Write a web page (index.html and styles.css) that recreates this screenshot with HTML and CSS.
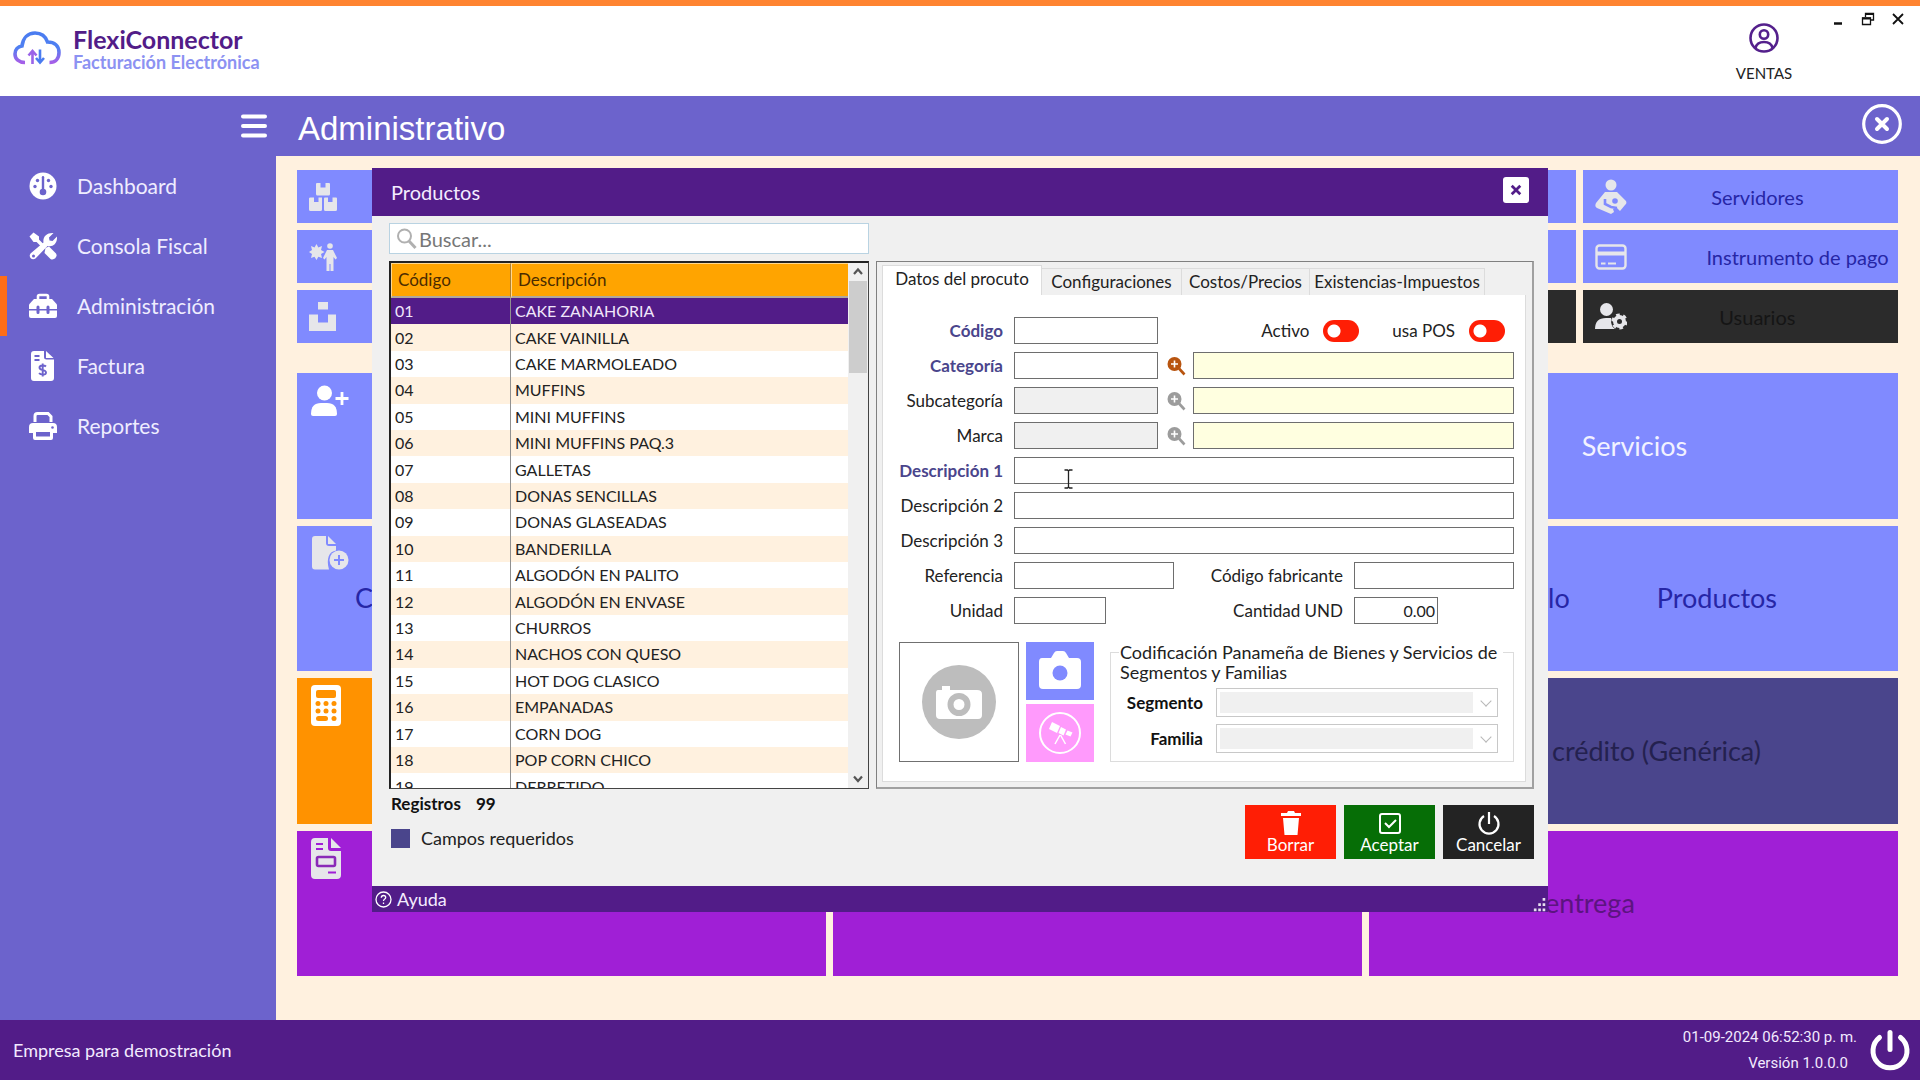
FILE: index.html
```html
<!DOCTYPE html>
<html lang="es">
<head>
<meta charset="utf-8">
<title>FlexiConnector - Facturación Electrónica</title>
<link rel="stylesheet" href="styles.css">
</head>
<body>
<div class="app">
  <header class="topbar">
    <div class="brand">
      <svg class="brand-logo" viewBox="0 0 48 34" fill="none">
        <defs><linearGradient id="cloud" x1="0" y1="0" x2="0" y2="1"><stop offset="0" stop-color="#4a7cf0"/><stop offset=".5" stop-color="#4f80f2"/><stop offset="1" stop-color="#a55fe8"/></linearGradient></defs>
        <path d="M12 31.500C6 31.500 2 28 2 23c0-4.500 3-7.500 7-8C10 7 15 2 22 2c6 0 10.500 3 12.500 9 7 0 11.500 4 11.500 10.500 0 6-3.500 10-9.500 10" stroke="url(#cloud)" stroke-width="3.600"/>
        <path d="M19.500 33V21M15.500 24.500l4-4.500 4 4.500" stroke="#9a63e8" stroke-width="2.600"/>
        <path d="M27 18.500v12M23 27l4 4.500 4-4.500" stroke="#4a7cf0" stroke-width="2.600"/>
      </svg>
      <div>
        <div class="brand-name">FlexiConnector</div>
        <div class="brand-sub">Facturación Electrónica</div>
      </div>
    </div>
    <div class="user">
      <svg width="30" height="30" viewBox="0 0 30 30" fill="none" stroke="#54208c" stroke-width="2.600"><circle cx="15" cy="15" r="13.500"/><circle cx="15" cy="11.500" r="4.200"/><path d="M6.500 25c1-4.500 4.500-6 8.500-6s7.500 1.500 8.500 6"/></svg>
      <span>VENTAS</span>
    </div>
    <div class="window-controls">
      <button type="button" aria-label="Minimizar"><svg width="14" height="14" viewBox="0 0 14 14"><path d="M3 11.500h8" stroke="#111" stroke-width="2.500"/></svg></button>
      <button type="button" aria-label="Restaurar"><svg width="14" height="14" viewBox="0 0 14 14" fill="none" stroke="#111" stroke-width="1.300"><path d="M4.500 5V1.500h8V8H10"/><path d="M4 2h9" stroke-width="2"/><path d="M1.500 6h8v6.500h-8z"/><path d="M1 6.500h9" stroke-width="2"/></svg></button>
      <button type="button" aria-label="Cerrar"><svg width="14" height="14" viewBox="0 0 14 14" stroke="#111" stroke-width="1.800"><path d="M2 2l10 10M12 2L2 12"/></svg></button>
    </div>
  </header>

  <div class="middle">
    <nav class="sidebar">
      <button type="button" class="menu-toggle" aria-label="Menú"><svg width="26" height="24" viewBox="0 0 26 24" stroke="#fff" stroke-width="4" stroke-linecap="round"><path d="M2 2.500h22M2 12h22M2 21.500h22"/></svg></button>
      <a class="nav-item" href="#"><svg width="28" height="28" viewBox="0 0 28 28"><circle cx="14" cy="14" r="13.500" fill="#fff"/><g fill="#6c63cc"><circle cx="8.500" cy="8.500" r="1.700"/><circle cx="19.500" cy="8.500" r="1.700"/><circle cx="6" cy="14.500" r="1.700"/><circle cx="22" cy="14.500" r="1.700"/><rect x="12.800" y="4" width="2.400" height="16" rx="1.200"/><circle cx="14" cy="20" r="3.300"/></g></svg>Dashboard</a>
      <a class="nav-item" href="#"><svg width="28" height="28" viewBox="0 0 28 28"><path d="M4 4l9 9" stroke="#fff" stroke-width="3.400"/><path d="M0.500 4.500L4.500.500l5.500 4V8L8 10H4.500z" fill="#fff"/><path d="M16.500 16l3.500-1.500 7 7c2 3-2 7.500-5.500 5.500L15.500 21z" fill="#fff"/><path d="M1.500 21.500L14.500 10.500C13.500 4.500 18 .500 24.500 1l-4.500 4.500.500 3 3 .600L28 4.500c.500 7-4 11-9.500 9.500L6.500 26.500c-3.500 2.500-7.500-1.500-5-5z" fill="#fff"/><circle cx="4.500" cy="24" r="1.500" fill="#6c63cc"/></svg>Consola Fiscal</a>
      <a class="nav-item active" href="#"><svg width="28" height="28" viewBox="0 0 28 28"><path d="M9 8V4.500Q9 3 10.500 3h7Q19 3 19 4.500V8" fill="none" stroke="#fff" stroke-width="2.600"/><path d="M5 7h18l5 5.500V17H0v-4.500z" fill="#fff"/><path d="M0 18.500h28V24q0 2-2 2H2q-2 0-2-2z" fill="#fff"/><path d="M9 15v5.500M19 15v5.500" stroke="#6c63cc" stroke-width="3" stroke-linecap="round"/></svg>Administración</a>
      <a class="nav-item" href="#"><svg width="28" height="30" viewBox="0 0 28 30"><path d="M5 0h10v6q0 2.500 2.500 2.500H25V27q0 3-3 3H5q-3 0-3-3V3q0-3 3-3z" fill="#fff"/><path d="M17 0l7.500 7H17z" fill="#fff"/><path d="M5.500 5h5M5.500 9h5" stroke="#6c63cc" stroke-width="1.800"/><path d="M17 15.500c-1.500-1.400-6.500-1.500-6.500 1.200 0 3.300 6.500 1.600 6.500 4.700 0 2.800-5 2.800-7 .8M13.700 12.500v13" stroke="#6c63cc" stroke-width="1.900" fill="none"/></svg>Factura</a>
      <a class="nav-item" href="#"><svg width="28" height="28" viewBox="0 0 28 28"><path d="M6 10V4q0-2.500 2.500-2.500H19L22 4.500V10" fill="none" stroke="#fff" stroke-width="3"/><path d="M4 11h20q4 0 4 4v6h-4v5q0 2-2 2H6q-2 0-2-2v-5H0v-6q0-4 4-4z" fill="#fff"/><path d="M7 20h14v4.500H7z" fill="#6c63cc"/><circle cx="23.500" cy="15.500" r="1.300" fill="#6c63cc"/></svg>Reportes</a>
    </nav>

    <main class="main">
      <div class="titlebar">
        <h1>Administrativo</h1>
        <button type="button" class="round-close" aria-label="Cerrar módulo"><svg width="42" height="42" viewBox="0 0 42 42" fill="none" stroke="#fff"><circle cx="21" cy="21" r="18.300" stroke-width="3.200"/><path d="M16 16l10 10M26 16L16 26" stroke-width="4" stroke-linecap="round"/></svg></button>
      </div>
      <div class="board">
        <div class="tiles-small">
          <button type="button" class="tile" aria-label="Inventario"><svg width="28" height="30" viewBox="0 0 28 30" fill="#e6e6ea"><path d="M8 1h3.500v4.500h5V1H20q1 0 1 1v10q0 1.500-1.500 1.500h-11Q7 13.500 7 12V2q0-1 1-1zM1.500 15.500H5V20h4.500v-4.500H13v12q0 1.500-1.500 1.500h-10Q0 29 0 27.500v-11q0-1 1.500-1zM16 15.500h3V20h4.500v-4.500H27q1 0 1 1v11q0 1.500-1.500 1.500h-10q-1.500 0-1.500-1.500v-11q0-1 1-1z"/></svg></button>
          <div class="tile"></div><div class="tile"></div><div class="tile"></div>
          <button type="button" class="tile"><svg width="32" height="36" viewBox="0 0 32 36"><circle cx="16" cy="6" r="5.500" fill="#e6e6ea"/><path d="M10 13h12l9 9c1 2 0 3-1 4l-5 6-3-3-4 1 1 3-3 2L2 29c-2-1-2-3-1-5z" fill="#e6e6ea"/><circle cx="20" cy="22" r="2.800" fill="#808aff"/><path d="M10 20v5l6 3 6 1" stroke="#808aff" stroke-width="2.600" fill="none"/></svg><span class="label">Servidores</span></button>
          <button type="button" class="tile" aria-label="Clientes"><svg width="28" height="30" viewBox="0 0 28 30" fill="#e6e6ea"><path d="M7.500 2l1.800 3.500L13 4l-1 4 3.500 2-3.500 2 1 4-3.700-1.200L7.500 18l-2-3.200L2 16l1-4-3-2 3-2-1-4 3.500 1.500z"/><circle cx="21" cy="4" r="2.800"/><path d="M18 8h6l4 8-1.500 1.500L24.500 15v14H21.500v-7h-1v7h-3V15l-2 2.500L14 16z"/></svg></button>
          <div class="tile"></div><div class="tile"></div><div class="tile"></div>
          <button type="button" class="tile"><svg width="32" height="32" viewBox="0 0 32 32" fill="none" stroke="#e6e6ea"><rect x="1.500" y="4.500" width="29" height="23" rx="3" stroke-width="2.400"/><path d="M2 12.500h28" stroke-width="4"/><path d="M6 22.500h4.500M13 22.500h8" stroke-width="2.200"/></svg><span class="label">Instrumento de pago</span></button>
          <button type="button" class="tile" aria-label="Almacén"><svg width="28" height="30" viewBox="0 0 28 30" fill="#e6e6ea"><path d="M9 0h10v7.500H9zM0 12.500h9v8h10v-8h8V29H0z"/></svg></button>
          <div class="tile"></div><div class="tile"></div><div class="tile dark"></div>
          <button type="button" class="tile dark"><svg width="32" height="32" viewBox="0 0 32 32"><circle cx="11.500" cy="8.500" r="6.500" fill="#e6e6ea"/><path d="M0 28q0-11 11-11h5q1 1 0 3 0 5 4 8z" fill="#e6e6ea"/><circle cx="24.500" cy="20.500" r="4.500" fill="none" stroke="#e6e6ea" stroke-width="4"/><circle cx="24.500" cy="20.500" r="6.800" fill="none" stroke="#e6e6ea" stroke-width="2.600" stroke-dasharray="3.600 3.520"/></svg><span class="label">Usuarios</span></button>
        </div>
        <div class="tiles-large">
          <button type="button" class="tile" aria-label="Nuevo cliente"><svg width="38" height="34" viewBox="0 -2 38 34"><circle cx="13.500" cy="8" r="7.500" fill="#fff"/><path d="M0 29q0-11 10-11h6q10 0 10 11 0 2-2 2H2q-2 0-2-2z" fill="#fff"/><path d="M31 7v13M24.500 13.500h13" stroke="#fff" stroke-width="2.800"/></svg></button>
          <div class="tile"></div>
          <button type="button" class="tile centered"><span class="label white">Servicios</span></button>
          <button type="button" class="tile"><svg width="38" height="34" viewBox="0 0 38 34"><path d="M4 0h11v7q0 3 3 3h7v4.500c-7 1-10 8-7 19H4q-3 0-3-3V3q0-3 3-3z" fill="#e6e6ea"/><path d="M17 0l8 8h-8z" fill="#e6e6ea"/><circle cx="28" cy="24" r="9.500" fill="#e6e6ea"/><path d="M28 19v10M23 24h10" stroke="#808aff" stroke-width="2"/></svg><span class="label from-icon">Cotizaciones</span></button>
          <div class="tile"></div>
          <button type="button" class="tile pair"><span class="label">Artículo</span><span class="label">Productos</span></button>
          <button type="button" class="tile orange" aria-label="Caja"><svg width="30" height="42" viewBox="0 0 30 42"><rect width="30" height="41" rx="4" fill="#fff"/><g fill="#ff9200"><rect x="5" y="5" width="20" height="8" rx="2"/><circle cx="7" cy="18.500" r="2.500"/><circle cx="15" cy="18.500" r="2.500"/><circle cx="23" cy="18.500" r="2.500"/><circle cx="7" cy="26" r="2.500"/><circle cx="15" cy="26" r="2.500"/><circle cx="23" cy="26" r="2.500"/><rect x="5" y="31" width="12" height="5" rx="2.500"/><circle cx="23" cy="33.500" r="2.500"/></g></svg></button>
          <div class="tile orange"></div>
          <button type="button" class="tile indigo trailing"><span class="label">Nota de crédito (Genérica)</span></button>
          <button type="button" class="tile purple" aria-label="Factura"><svg width="30" height="42" viewBox="0 0 30 42"><path d="M4 0h13v10q0 3 3 3h10v24q0 4-4 4H4q-4 0-4-4V4q0-4 4-4z" fill="#e6e6ea"/><path d="M20 0l10 10H20z" fill="#e6e6ea"/><path d="M5 6h7M5 11h7M17 34.500h8" stroke="#a01fd6" stroke-width="2.200"/><rect x="6" y="19" width="18" height="9" rx="1.500" fill="none" stroke="#8a2ab8" stroke-width="2.600"/></svg></button>
          <div class="tile purple"></div>
          <button type="button" class="tile purple delivery"><span class="label">entrega</span></button>
        </div>
      </div>
    </main>
  </div>

  <footer class="statusbar">
    <span class="company">Empresa para demostración</span>
    <div class="build"><span>01-09-2024 06:52:30 p. m.</span><span class="version">Versión 1.0.0.0</span></div>
    <button type="button" aria-label="Salir"><svg width="42" height="42" viewBox="0 0 42 42" fill="none" stroke="#fff" stroke-width="5" stroke-linecap="round"><path d="M21 3.500v17"/><path d="M10.500 8.500a17 17 0 1 0 21 0"/></svg></button>
  </footer>
</div>

<div class="overlay">
  <section class="dialog" role="dialog" aria-labelledby="dialog-title">
    <header class="dialog-head">
      <h2 id="dialog-title">Productos</h2>
      <button type="button" aria-label="Cerrar"><svg width="12" height="12" viewBox="0 0 14 14" stroke="#521c88" stroke-width="3.200"><path d="M2 2l10 10M12 2L2 12"/></svg></button>
    </header>
    <div class="dialog-body">
      <div class="search">
        <svg width="22" height="22" viewBox="0 0 22 22" fill="none" stroke="#b0b0b0"><circle cx="8.500" cy="8" r="6.500" stroke-width="2"/><path d="M13 13l6.500 7" stroke-width="3"/></svg>
        <input type="text" placeholder="Buscar..." aria-label="Buscar">
      </div>
      <div class="list">
        <div class="list-view">
          <table>
            <thead><tr><th class="code">Código</th><th>Descripción</th></tr></thead>
            <tbody>
              <tr class="selected"><td>01</td><td>CAKE ZANAHORIA</td></tr>
              <tr><td>02</td><td>CAKE VAINILLA</td></tr>
              <tr><td>03</td><td>CAKE MARMOLEADO</td></tr>
              <tr><td>04</td><td>MUFFINS</td></tr>
              <tr><td>05</td><td>MINI MUFFINS</td></tr>
              <tr><td>06</td><td>MINI MUFFINS PAQ.3</td></tr>
              <tr><td>07</td><td>GALLETAS</td></tr>
              <tr><td>08</td><td>DONAS SENCILLAS</td></tr>
              <tr><td>09</td><td>DONAS GLASEADAS</td></tr>
              <tr><td>10</td><td>BANDERILLA</td></tr>
              <tr><td>11</td><td>ALGODÓN EN PALITO</td></tr>
              <tr><td>12</td><td>ALGODÓN EN ENVASE</td></tr>
              <tr><td>13</td><td>CHURROS</td></tr>
              <tr><td>14</td><td>NACHOS CON QUESO</td></tr>
              <tr><td>15</td><td>HOT DOG CLASICO</td></tr>
              <tr><td>16</td><td>EMPANADAS</td></tr>
              <tr><td>17</td><td>CORN DOG</td></tr>
              <tr><td>18</td><td>POP CORN CHICO</td></tr>
              <tr><td>19</td><td>DERRETIDO</td></tr>
            </tbody>
          </table>
        </div>
        <div class="scrollbar">
          <svg width="18" height="18" viewBox="0 0 18 18" fill="none" stroke="#555" stroke-width="2.200"><path d="M5 11l4-4.500 4 4.500"/></svg>
          <div class="thumb"></div>
          <svg class="down" width="18" height="18" viewBox="0 0 18 18" fill="none" stroke="#555" stroke-width="2.200"><path d="M5 6.500L9 11l4-4.500"/></svg>
        </div>
      </div>

      <div class="panel">
        <div class="tabs" role="tablist">
          <button type="button" role="tab" class="tab current" aria-selected="true">Datos del procuto</button>
          <button type="button" role="tab" class="tab">Configuraciones</button>
          <button type="button" role="tab" class="tab">Costos/Precios</button>
          <button type="button" role="tab" class="tab">Existencias-Impuestos</button>
        </div>
        <form class="page">
          <div class="row">
            <label class="lbl req" for="codigo">Código</label><input id="codigo" class="field w-code" type="text">
            <span class="switches">
              <label class="switch">Activo<input type="checkbox"></label>
              <label class="switch">usa POS<input type="checkbox"></label>
            </span>
          </div>
          <div class="row">
            <label class="lbl req" for="categoria">Categoría</label><input id="categoria" class="field w-code" type="text">
            <button type="button" class="lookup on" aria-label="Buscar categoría"><svg width="20" height="20" viewBox="0 0 20 20"><circle cx="8.500" cy="8" r="7" fill="currentColor"/><path d="M13 12.500l5.500 6" stroke="currentColor" stroke-width="2.600"/><path d="M8.500 4.500v7M5 8h7" stroke="#fff" stroke-width="1.600"/></svg></button>
            <input class="field fill info" type="text" readonly aria-label="Nombre de categoría">
          </div>
          <div class="row">
            <label class="lbl" for="subcategoria">Subcategoría</label><input id="subcategoria" class="field w-code" type="text" disabled>
            <button type="button" class="lookup" aria-label="Buscar subcategoría"><svg width="20" height="20" viewBox="0 0 20 20"><circle cx="8.500" cy="8" r="7" fill="currentColor"/><path d="M13 12.500l5.500 6" stroke="currentColor" stroke-width="2.600"/><path d="M8.500 4.500v7M5 8h7" stroke="#fff" stroke-width="1.600"/></svg></button>
            <input class="field fill info" type="text" readonly aria-label="Nombre de subcategoría">
          </div>
          <div class="row">
            <label class="lbl" for="marca">Marca</label><input id="marca" class="field w-code" type="text" disabled>
            <button type="button" class="lookup" aria-label="Buscar marca"><svg width="20" height="20" viewBox="0 0 20 20"><circle cx="8.500" cy="8" r="7" fill="currentColor"/><path d="M13 12.500l5.500 6" stroke="currentColor" stroke-width="2.600"/><path d="M8.500 4.500v7M5 8h7" stroke="#fff" stroke-width="1.600"/></svg></button>
            <input class="field fill info" type="text" readonly aria-label="Nombre de marca">
          </div>
          <div class="row">
            <label class="lbl req" for="desc1">Descripción 1</label><input id="desc1" class="field fill" type="text">
            <svg class="ibeam" width="9" height="20" viewBox="0 0 9 20" fill="none" stroke="#222" stroke-width="1.300"><path d="M.500 1h3l1 1 1-1h3M4.500 2v16M.500 19h3l1-1 1 1h3"/></svg>
          </div>
          <div class="row"><label class="lbl" for="desc2">Descripción 2</label><input id="desc2" class="field fill" type="text"></div>
          <div class="row"><label class="lbl" for="desc3">Descripción 3</label><input id="desc3" class="field fill" type="text"></div>
          <div class="row">
            <label class="lbl" for="referencia">Referencia</label><input id="referencia" class="field w-ref" type="text">
            <label class="lbl wide" for="fabricante">Código fabricante</label><input id="fabricante" class="field w-ref" type="text">
          </div>
          <div class="row">
            <label class="lbl" for="unidad">Unidad</label><span class="slot"><input id="unidad" class="field w-unit" type="text"></span>
            <label class="lbl wide" for="cantidad">Cantidad UND</label><span class="slot"><input id="cantidad" class="field w-qty" type="text" value="0.00"></span>
          </div>
          <div class="extras">
            <div class="photo"><svg width="76" height="76" viewBox="0 0 76 76"><circle cx="38" cy="38" r="37" fill="#bdbdbd"/><path d="M17 26h4v-4h8v4h27q5 0 5 4v21q0 4-4 4H19q-4 0-4-4V29q0-3 2-3z" fill="#fff"/><circle cx="38" cy="40.500" r="8.500" fill="#fff" stroke="#bdbdbd" stroke-width="6"/></svg></div>
            <div class="photo-actions">
              <button type="button" class="take" aria-label="Tomar foto"><svg width="44" height="40" viewBox="0 0 44 40"><path d="M4 7h9l3-5q1-2 3-2h6q2 0 3 2l3 5h8q4 0 4 4v23q0 4-4 4H5q-4 0-4-4V11q0-4 3-4z" fill="#fff"/><circle cx="22" cy="22" r="7.500" fill="#808aff"/></svg></button>
              <button type="button" class="find" aria-label="Buscar imagen"><svg width="44" height="44" viewBox="0 0 44 44"><circle cx="22" cy="22" r="20" fill="none" stroke="#fff" stroke-width="2"/><g fill="#fff"><path d="M14 11l8 4-3 7-8-4zM23 16l5 2.500-2.500 6-5-2.500zM29.500 19.500l5 2-2 4-5-2z"/></g><path d="M22 24l-5 9M22.500 24l5 9" stroke="#fff" stroke-width="1.500"/></svg></button>
            </div>
            <fieldset class="cpbs">
              <legend>Codificación Panameña de Bienes y Servicios de Segmentos y Familias</legend>
              <div class="pick"><label for="segmento">Segmento</label><select id="segmento" disabled><option></option></select></div>
              <div class="pick"><label for="familia">Familia</label><select id="familia" disabled><option></option></select></div>
            </fieldset>
          </div>
        </form>
      </div>

      <div class="notes">
        <div class="count">Registros <span>99</span></div>
        <div class="legend-row"><i class="swatch"></i>Campos requeridos</div>
      </div>
      <div class="actions">
        <button type="button" class="act red"><svg width="24" height="26" viewBox="0 0 24 26" fill="#fff"><path d="M2 3h6l1-2h6l1 2h6v3H2zM4 8h16l-1.500 17h-13z"/></svg>Borrar</button>
        <button type="button" class="act green"><svg width="24" height="26" viewBox="0 0 24 26" fill="none" stroke="#fff" stroke-width="2"><rect x="2" y="4" width="20" height="19" rx="2"/><path d="M7 13l4 4 7-7"/></svg>Aceptar</button>
        <button type="button" class="act black"><svg width="24" height="26" viewBox="0 0 24 26" fill="none" stroke="#fff" stroke-width="2.200"><path d="M12 2v12M7 6a9.500 9.500 0 1 0 10 0"/></svg>Cancelar</button>
      </div>
    </div>
    <footer class="dialog-foot">
      <a href="#"><svg width="17" height="17" viewBox="0 0 17 17" fill="none" stroke="#fff" stroke-width="1.300"><circle cx="8.500" cy="8.500" r="7.500"/><path d="M6.300 6.800q0-2.300 2.200-2.300t2.200 2q0 1-1.200 1.700-1 .600-1 1.800M8.500 11.500V13"/></svg>Ayuda</a>
      <svg class="grip" width="14" height="14" viewBox="0 0 16 16" fill="#e8e0f0"><path d="M11 0h3v3h-3zM11 6h3v3h-3zM6 6h3v3H6zM11 12h3v3h-3zM6 12h3v3H6zM1 12h3v3H1z"/></svg>
    </footer>
  </section>
</div>
</body>
</html>
```
FILE: styles.css
```css
* { box-sizing: border-box; }
:root {
  --ui: Lato, "Noto Sans", sans-serif;
  --deep: #521c88;
  --slate: #6c63cc;
  --tile: #808aff;
  --cream: #fff1df;
}
body { margin: 0; font: 17px/20px var(--ui); color: #222; }
button, input, select { font: inherit; color: inherit; }
button { border: 0; padding: 0; background: none; }
svg { display: block; flex: none; }
a { color: inherit; text-decoration: none; }

.app { display: flex; flex-direction: column; min-height: 100vh; }

.topbar { display: flex; height: 96px; border-top: 6px solid #ff8431; background: #fff; }
.brand { display: flex; flex: 1; gap: 12px; padding: 17px 0 0 13px; }
.brand-logo { width: 48px; height: 34px; margin-top: 8px; }
.brand-name { font-size: 25px; line-height: 32px; font-weight: 700; color: var(--deep); }
.brand-sub { font-size: 18px; line-height: 14px; font-weight: 700; color: #8c92f2; }
.user { display: flex; flex-direction: column; align-items: center; gap: 10px; padding-top: 17px; width: 60px; font-size: 15px; }
.window-controls { display: flex; gap: 16px; align-items: flex-start; padding: 6px 15px 0 37px; }

.middle { display: flex; flex: 1; }
.sidebar { width: 276px; background: var(--slate); color: #efedff; }
.menu-toggle { display: block; margin: 18px 9px 18px auto; }
.nav-item { display: flex; align-items: center; gap: 20px; height: 60px; padding-left: 29px; font-size: 21px; line-height: 24px; }
.nav-item.active { border-left: 7px solid #ff6d17; padding-left: 22px; }

.main { flex: 1; display: flex; flex-direction: column; background: var(--cream); }
.titlebar { display: flex; align-items: center; justify-content: space-between; height: 60px; padding: 0 17px 4px 22px; background: var(--slate); color: #fff; }
.titlebar h1 { margin: 0; padding-top: 10px; font: 33px/40px "Liberation Sans", Arial, sans-serif; }
.board { display: flex; flex-direction: column; flex: 1; gap: 30px; padding: 14px 22px 44px 21px; }
.tiles-small { display: grid; grid-template-columns: repeat(5, minmax(0, 1fr)); grid-auto-rows: 53px; gap: 7px; }
.tiles-large { display: grid; flex: 1; grid-template-columns: repeat(3, minmax(0, 1fr)); grid-template-rows: repeat(4, 1fr); gap: 7px; }
.tile { display: flex; align-items: flex-start; padding: 10px 12px; background: var(--tile); color: #2626a6; text-align: left; font-size: 20px; line-height: 24px; }
.tiles-small .tile { align-items: center; padding: 0 0 0 12px; }
.tiles-small .label { min-width: 102px; margin-left: 79px; text-align: center; white-space: nowrap; }
.tiles-large .tile { padding-left: 14px; font-size: 27px; line-height: 32px; }
.tile.dark { background: #2b2b2b; color: #151515; }
.tile.orange { background: #ff9200; }
.tile.indigo { background: #4a458c; color: #24214f; }
.tile.purple { background: #a01fd6; color: #5c1480; }
.tiles-large .orange, .tiles-large .purple { padding-top: 7px; }
.label.white { color: #f2f2ff; }
.tiles-large .centered { align-items: center; justify-content: center; }
.tiles-large .trailing { align-items: center; justify-content: flex-end; padding-right: 137px; }
.tiles-large .delivery { align-items: center; padding: 10px 0 10px 176px; }
.from-icon { align-self: center; padding-left: 6px; }
.tiles-large .pair { align-items: center; justify-content: flex-end; gap: 87px; padding-right: 121px; }

.statusbar { display: flex; align-items: center; height: 60px; padding: 0 9px 0 13px; background: var(--deep); color: #f2eaff; }
.company { flex: 1; font-size: 18px; }
.build { display: flex; flex-direction: column; gap: 6px; margin-right: 12px; font: 15px/20px Roboto, "Liberation Sans", sans-serif; text-align: right; }
.version { padding-right: 9px; }

.overlay { position: fixed; inset: 0; display: grid; place-items: center; }
.dialog { width: 1176px; background: #f0f0f0; }
.dialog-head { display: flex; align-items: center; justify-content: space-between; height: 48px; padding: 0 19px 4px 19px; background: var(--deep); color: #f4ecff; }
.dialog-head h2 { margin: 4px 0 0; font-size: 20px; line-height: 24px; font-weight: 400; }
.dialog-head button { display: grid; place-items: center; width: 26px; height: 26px; border-radius: 3px; background: #fff; }
.dialog-body { display: grid; grid-template-columns: 480px minmax(0, 1fr); grid-template-rows: 31px auto auto; gap: 7px; padding: 7px 14px 27px 17px; }
.search { display: flex; align-items: center; gap: 1px; padding-left: 6px; border: 1px solid #b9d3e2; background: #fff; }
.search input { flex: 1; min-width: 0; border: 0; padding: 0; background: none; font-size: 20px; outline: 0; }
.search input::placeholder { color: #777; opacity: 1; }

.list { grid-area: 2 / 1; display: flex; height: 528px; border: 1px solid #444; border-top: 2px solid #222; border-left: 2px solid #222; background: #fff; overflow: hidden; }
.list-view { flex: 1; overflow: hidden; }
.list table { width: 100%; height: 537px; border-collapse: separate; border-spacing: 0; table-layout: fixed; }
.list th { height: 35px; padding: 0 0 0 6px; border-top: 1px solid #ffd890; border-left: 1px solid #ffd890; border-bottom: 2px solid #b0a89c; background: #ffa400; color: #4a2c00; font-weight: 400; text-align: left; }
.list th.code { width: 120px; border-right: 1px solid #b08030; }
.list td { padding: 0 0 0 4px; font-size: 16px; line-height: 20px; }
.list td:first-child { border-right: 1px solid #909090; }
.list tbody tr:nth-child(even) { background: var(--cream); }
.list tbody tr.selected { background: var(--deep); color: #f0e6fa; }
.scrollbar { display: flex; flex-direction: column; width: 20px; padding: 0 1px; background: #f0f0f0; }
.thumb { height: 92px; background: #cdcdcd; }
.down { margin-top: auto; }

.panel { grid-area: 2 / 2; display: flex; flex-direction: column; padding: 3px 6px 5px 5px; border: 1px solid #808080; border-right: 2px solid #a0a0a0; border-bottom: 2px solid #a0a0a0; }
.tabs { display: flex; align-items: flex-end; height: 30px; }
.tab { height: 27px; padding: 0; border: 1px solid #dcdcdc; border-bottom: 0; border-left: 0; flex: 0 0 140px; white-space: nowrap; }
.tab.current { height: 30px; flex-basis: 160px; background: #fff; border-left: 1px solid #dcdcdc; padding-bottom: 3px; }
.tab:nth-child(3) { flex-basis: 128px; }
.tab:nth-child(4) { flex-basis: 175px; }
.page { flex: 1; display: flex; flex-direction: column; gap: 8px; padding: 22px 11px 0 16px; border: 1px solid #dcdcdc; border-top: 0; background: #fff; }
.row { position: relative; display: flex; align-items: center; height: 27px; }
.lbl { width: 104px; margin-right: 11px; text-align: right; white-space: nowrap; }
.lbl.req { color: #4a458c; font-weight: 700; }
.lbl.wide { width: auto; flex: 1; }
.field { height: 27px; min-width: 0; padding: 0 2px; border: 1px solid #6e6e6e; background: #fff; outline: 0; }
.field:disabled { background: #f0f0f0; }
.field.info { background: #ffffe0; }
.fill { flex: 1; }
.w-code { width: 144px; }
.w-ref, .slot { width: 160px; flex: none; }
.w-unit { width: 92px; }
.w-qty { width: 84px; font-size: 16px; text-align: right; }
.slot { display: flex; }
.lookup { width: 20px; margin: 0 7px 0 8px; color: #9c9c9c; }
.lookup.on { color: #b8540f; }
.switches { display: flex; flex: 1; justify-content: flex-end; gap: 33px; padding-right: 9px; }
.switch { display: flex; align-items: center; gap: 14px; }
.switch input { appearance: none; width: 36px; height: 22px; margin: 0; border-radius: 11px; background: radial-gradient(circle at 11px 11px, #fff 6px, #ff1e05 7px); }
.ibeam { position: absolute; left: 165px; top: 12px; }

.extras { display: flex; margin-top: 10px; }
.photo { display: grid; place-items: center; width: 120px; height: 120px; border: 1px solid #707070; }
.photo-actions { display: flex; flex-direction: column; gap: 4px; margin: 0 16px 0 7px; }
.photo-actions button { display: grid; place-items: center; width: 68px; height: 58px; }
.take { background: var(--tile); }
.find { background: #ff9afc; }
.cpbs { display: flex; flex-direction: column; gap: 7px; flex: 1; min-width: 0; height: 120px; margin: 0; padding: 26px 15px 0 8px; border: 1px solid #dcdcdc; }
.cpbs legend { height: 20px; width: 384px; margin-right: -8px; padding: 0 1px; font-size: 18px; line-height: 20px; }
.pick { position: relative; display: flex; align-items: center; justify-content: flex-end; gap: 13px; color: #111; font-weight: 700; }
.pick select { appearance: none; width: 282px; height: 29px; padding: 3px 24px 3px 3px; border: 1px solid #c8c8c8; background: linear-gradient(#f0f0f0, #f0f0f0) content-box, #fff; opacity: 1; }
.pick::after { content: ""; position: absolute; right: 8px; top: 9px; width: 7px; height: 7px; border: solid #b8b8b8; border-width: 0 1px 1px 0; transform: rotate(45deg); }

.notes { grid-area: 3 / 1; display: flex; flex-direction: column; gap: 16px; padding: 0 2px; }
.count { font-weight: 700; line-height: 16px; color: #111; }
.count span { padding-left: 11px; }
.legend-row { display: flex; align-items: center; gap: 11px; font-size: 18px; }
.swatch { width: 19px; height: 19px; background: #4a458c; }
.actions { grid-area: 3 / 2; display: flex; justify-content: flex-end; gap: 8px; padding-top: 9px; }
.act { display: flex; flex-direction: column; align-items: center; width: 91px; height: 54px; padding-top: 5px; color: #fff; line-height: 18px; }
.red { background: #ff1e05; }
.green { background: #066e06; }
.black { background: #232323; }
.dialog-foot { display: flex; align-items: center; justify-content: space-between; height: 26px; padding: 0 1px 0 3px; background: var(--deep); color: #f4ecff; }
.dialog-foot a { display: flex; align-items: center; gap: 5px; font-size: 18px; }
.grip { align-self: flex-end; }
```
